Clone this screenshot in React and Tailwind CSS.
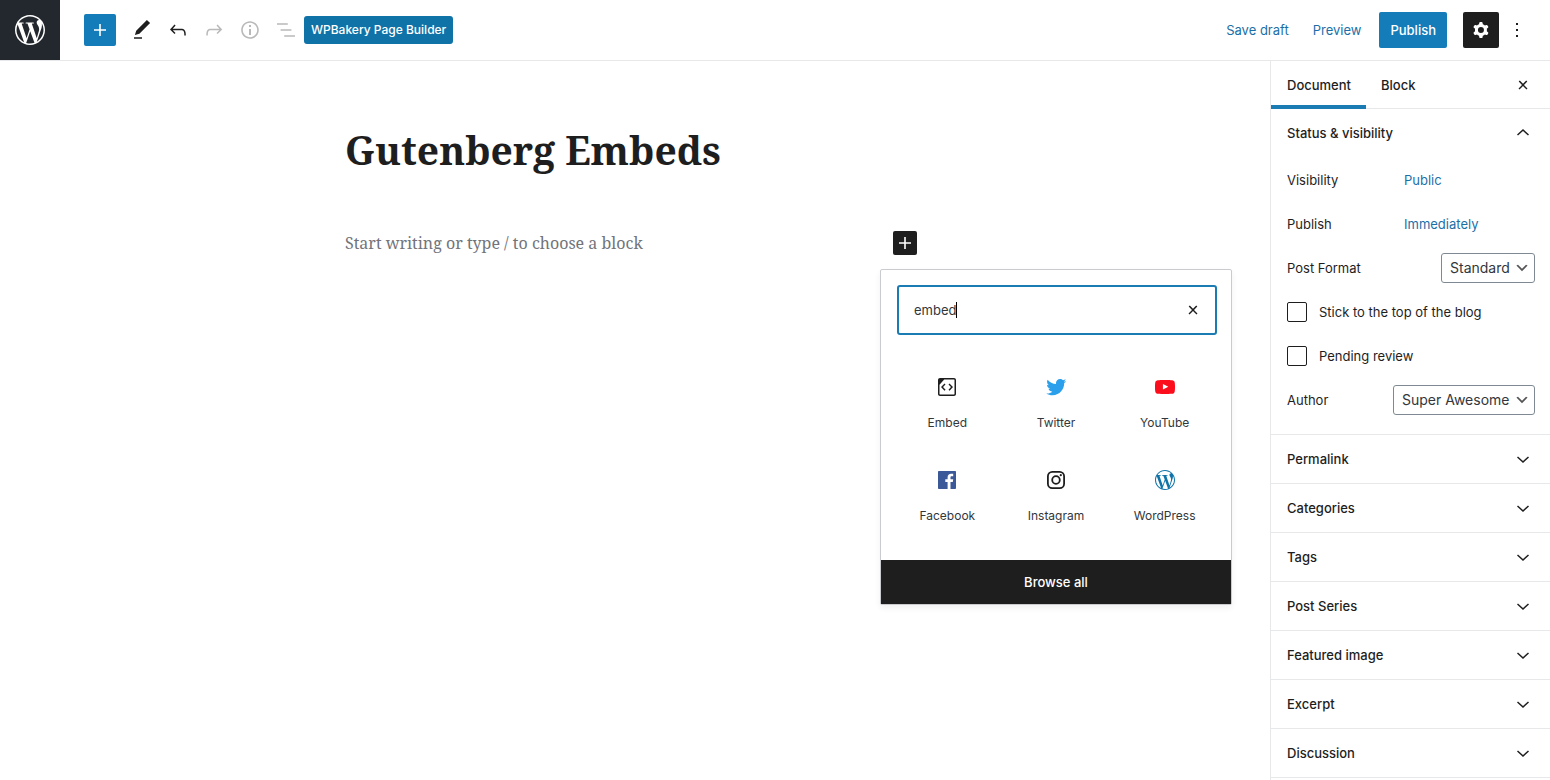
import React, { useState } from "react";
import { SiWordpress } from "react-icons/si";

const ICONS = {
  plus: "M18 11.2h-5.2V6h-1.6v5.2H6v1.6h5.2V18h1.6v-5.2H18z",
  edit: "M20.1 5.1L16.9 2 6.2 12.7l-1.3 4.4 4.5-1.3L20.1 5.1zM4 20.8h8v-1.5H4v1.5z",
  undo: "M18.3 11.7c-.6-.6-1.4-.9-2.3-.9H6.7l2.9-3.3-1.1-1-4.5 5L8.5 16l1-1-2.7-2.7H16c.5 0 .9.2 1.3.5 1 1 1 3.4 1 4.5v.3h1.5v-.2c0-1.5 0-4.3-1.5-5.7z",
  redo: "M15.6 6.5l-1.1 1 2.9 3.3H8c-.9 0-1.7.3-2.3.9-1.4 1.5-1.4 4.2-1.4 5.6v.2h1.5v-.3c0-1.1 0-3.5 1-4.5.3-.3.7-.5 1.3-.5h9.2L14.5 15l1.1 1.1 4.6-4.6-4.6-5z",
  info: "M12 3.2c-4.8 0-8.8 3.9-8.8 8.8 0 4.8 3.9 8.8 8.8 8.8 4.8 0 8.8-3.9 8.8-8.8 0-4.8-4-8.8-8.8-8.8zm0 16c-4 0-7.2-3.3-7.2-7.2C4.8 8 8 4.8 12 4.8s7.2 3.3 7.2 7.2c0 4-3.2 7.2-7.2 7.2zM11 17h2v-6h-2v6zm0-8h2V7h-2v2z",
  list: "M13.8 5.2H3v1.5h10.8V5.2zm-3.6 12v1.5H21v-1.5H10.2zm7.2-6H6.6v1.5h10.8v-1.5z",
  close:
    "M13 11.9l3.3-3.4-1.1-1-3.2 3.3-3.2-3.3-1.1 1 3.3 3.4-3.5 3.6 1 1L12 13l3.5 3.5 1-1z",
  down: "M17 9.4L12 14 7 9.4l-1 1.1 6 5.5 6-5.5z",
  up: "M17 14.6L12 10l-5 4.6-1-1.1L12 8l6 5.5z",
  more: "M13 19h-2v-2h2v2zm0-6h-2v-2h2v2zm0-6h-2V5h2v2z",
  cog: "M10.289 4.836A1 1 0 0111.275 4h1.306a1 1 0 01.987.836l.244 1.466c.787.26 1.503.679 2.108 1.218l1.393-.522a1 1 0 011.216.437l.653 1.13a1 1 0 01-.23 1.273l-1.148.944a6.025 6.025 0 010 2.435l1.149.946a1 1 0 01.23 1.272l-.653 1.13a1 1 0 01-1.216.437l-1.394-.522c-.605.54-1.32.958-2.108 1.218l-.244 1.466a1 1 0 01-.987.836h-1.306a1 1 0 01-.986-.836l-.244-1.466a5.995 5.995 0 01-2.108-1.218l-1.394.522a1 1 0 01-1.217-.436l-.653-1.131a1 1 0 01.23-1.272l1.149-.946a6.026 6.026 0 010-2.435l-1.148-.944a1 1 0 01-.23-1.272l.653-1.131a1 1 0 011.217-.437l1.393.522a5.994 5.994 0 012.108-1.218l.244-1.466zM14.929 12a3 3 0 11-6 0 3 3 0 016 0z",
  embed:
    "M19 3H5c-1.1 0-2 .9-2 2v14c0 1.1.9 2 2 2h14c1.1 0 2-.9 2-2V5c0-1.1-.9-2-2-2zm.5 16c0 .3-.2.5-.5.5H5c-.3 0-.5-.2-.5-.5V9.8l4.7-5.3H19c.3 0 .5.2.5.5v14zm-6-9.5L16 12l-2.5 2.8 1.1 1L18 12l-3.5-3.5-1 1zm-3 0l-1-1L6 12l3.5 3.8 1.1-1L8 12l2.5-2.5z",
  twitter:
    "M22.23 5.924c-.736.326-1.527.547-2.357.646.847-.508 1.498-1.312 1.804-2.27-.793.47-1.671.812-2.606.996C18.324 4.498 17.257 4 16.077 4c-2.266 0-4.103 1.837-4.103 4.103 0 .322.036.635.106.935-3.41-.17-6.433-1.804-8.457-4.287-.353.607-.556 1.312-.556 2.064 0 1.424.724 2.68 1.825 3.415-.673-.022-1.305-.207-1.86-.514v.052c0 1.988 1.415 3.647 3.293 4.023-.344.095-.707.145-1.08.145-.265 0-.522-.026-.773-.074.522 1.63 2.038 2.817 3.833 2.85-1.404 1.1-3.174 1.757-5.096 1.757-.332 0-.66-.02-.98-.057 1.816 1.164 3.973 1.843 6.29 1.843 7.547 0 11.675-6.252 11.675-11.675 0-.178-.004-.355-.012-.53.802-.578 1.497-1.3 2.047-2.124z",
  youtube:
    "M21.8 8s-.195-1.377-.795-1.984c-.76-.797-1.613-.8-2.004-.847-2.798-.203-6.996-.203-6.996-.203h-.01s-4.197 0-6.996.202c-.39.046-1.242.05-2.003.846C2.395 6.623 2.2 8 2.2 8S2 9.62 2 11.24v1.517c0 1.618.2 3.237.2 3.237s.195 1.378.795 1.985c.76.797 1.76.77 2.205.855 1.6.153 6.8.2 6.8.2s4.203-.005 7-.208c.392-.047 1.244-.05 2.005-.847.6-.607.795-1.985.795-1.985s.2-1.618.2-3.237v-1.517C22 9.62 21.8 8 21.8 8zM9.935 14.595v-5.62l5.403 2.82-5.403 2.8z",
  facebook:
    "M20 3H4c-.6 0-1 .4-1 1v16c0 .5.4 1 1 1h8.6v-7h-2.3v-2.7h2.3v-2c0-2.3 1.4-3.6 3.5-3.6 1 0 1.8.1 2.1.1v2.4h-1.4c-1.1 0-1.3.5-1.3 1.3v1.7h2.7l-.4 2.8h-2.3v7H20c.5 0 1-.4 1-1V4c0-.6-.4-1-1-1z",
};

function Icon({ name }) {
  return (
    <svg viewBox="0 0 24 24" className="size-6" fill="currentColor" aria-hidden="true">
      <path fillRule="evenodd" d={ICONS[name]} />
    </svg>
  );
}

function InstagramIcon() {
  return (
    <svg viewBox="0 0 24 24" className="size-6" fill="none" stroke="currentColor" aria-hidden="true">
      <rect x="3.9" y="3.9" width="16.2" height="16.2" rx="4.4" strokeWidth="1.8" />
      <circle cx="12" cy="12" r="3.8" strokeWidth="1.8" />
      <circle cx="16.8" cy="7.2" r="1.1" fill="currentColor" stroke="none" />
    </svg>
  );
}

const blocks = [
  { label: "Embed", icon: <Icon name="embed" /> },
  { label: "Twitter", icon: <Icon name="twitter" />, color: "text-[#2a9fec]" },
  { label: "YouTube", icon: <Icon name="youtube" />, color: "text-[#fb0d1b]" },
  { label: "Facebook", icon: <Icon name="facebook" />, color: "text-[#3b5998]" },
  { label: "Instagram", icon: <InstagramIcon /> },
  {
    label: "WordPress",
    icon: <SiWordpress className="size-5" />,
    color: "text-[#0f73a8]",
  },
];

const panels = [
  "Permalink",
  "Categories",
  "Tags",
  "Post Series",
  "Featured image",
  "Excerpt",
  "Discussion",
];

function ToolButton({ name, label, disabled }) {
  return (
    <button
      aria-label={label}
      disabled={disabled}
      className="flex size-9 items-center justify-center disabled:text-[#b9b9b9]"
    >
      <Icon name={name} />
    </button>
  );
}

function Header() {
  return (
    <header className="flex h-[61px] items-start border-b border-[#e7e8e9]">
      <a
        href="#posts"
        aria-label="View posts"
        className="flex size-[60px] items-center justify-center bg-[#23282e] text-white"
      >
        <SiWordpress className="size-[30px]" />
      </a>
      <div className="flex h-[60px] flex-1 items-center pl-6 pr-[15px]">
        <button
          aria-label="Add block"
          className="mr-2 flex size-8 items-center justify-center rounded-xs bg-[#147cb9] text-white"
        >
          <Icon name="plus" />
        </button>
        <ToolButton name="edit" label="Modes" />
        <ToolButton name="undo" label="Undo" />
        <ToolButton name="redo" label="Redo" disabled />
        <ToolButton name="info" label="Content structure" disabled />
        <ToolButton name="list" label="Block navigation" disabled />
        <button className="h-7 rounded-[3px] bg-[#0f73a8] px-[7px] text-xs font-medium text-white">
          WPBakery Page Builder
        </button>
        <div className="ml-auto flex items-center">
          <button className="mr-6 text-[#1b6fa8]">Save draft</button>
          <button className="mr-[18px] text-[#1b6fa8]">Preview</button>
          <button className="mr-4 h-9 rounded-xs bg-[#147cb9] px-[11px] font-medium text-white">
            Publish
          </button>
          <button
            aria-label="Settings"
            className="flex size-9 items-center justify-center rounded-xs bg-[#1e1e1e] text-white"
          >
            <Icon name="cog" />
          </button>
          <ToolButton name="more" label="More tools" />
        </div>
      </div>
    </header>
  );
}

function Inserter() {
  const [search, setSearch] = useState("embed");

  return (
    <div className="absolute -left-[13px] top-[38px] z-10 w-[352px] rounded-xs border border-[#c9cbce] bg-white shadow-[0_3px_6px_rgba(0,0,0,0.06)]">
      <div className="relative pl-4 pr-[14px] pt-[15px]">
        <input
          aria-label="Search for a block"
          value={search}
          onChange={(e) => setSearch(e.target.value)}
          className="h-[50px] w-full rounded-[3px] border-2 border-[#1b7bb3] pl-[15px] pr-12 text-[#32373c] outline-none"
        />
        {search === "embed" && (
          <span className="absolute left-[75px] top-8 h-4 w-px bg-black" />
        )}
        <button
          aria-label="Reset search"
          onClick={() => setSearch("")}
          className="absolute right-[26px] top-7"
        >
          <Icon name="close" />
        </button>
      </div>
      <div className="mb-[18px] mt-[21px] grid grid-cols-3 px-3">
        {blocks.map((block) => (
          <button
            key={block.label}
            className="flex h-[93px] flex-col items-center justify-center gap-4"
          >
            <span className={clsxColor(block.color)}>{block.icon}</span>
            <span className="text-xs text-[#32373c]">{block.label}</span>
          </button>
        ))}
      </div>
      <button className="block h-11 w-full bg-[#1e1e1e] font-medium text-white">
        Browse all
      </button>
    </div>
  );
}

function clsxColor(color = "text-[#1e1e1e]") {
  return `flex size-6 items-center justify-center ${color}`;
}

function Editor() {
  return (
    <main className="min-w-0 flex-1">
      <div className="mx-auto w-full max-w-[580px] font-['Noto_Serif','DejaVu_Serif',serif]">
        <input
          aria-label="Title"
          defaultValue="Gutenberg Embeds"
          className="mt-[58px] block h-[60px] w-full text-[39px] font-bold text-[#1e1e1e] outline-none"
        />
        <div className="mt-[50px] flex h-7 items-center">
          <input
            aria-label="Block text"
            placeholder="Start writing or type / to choose a block"
            className="min-w-0 flex-1 text-base outline-none placeholder:text-[#72747a]"
          />
          <div className="relative mr-2 font-['Inter',sans-serif]">
            <button
              aria-label="Add block"
              className="flex size-6 items-center justify-center rounded-xs bg-[#1e1e1e] text-white"
            >
              <Icon name="plus" />
            </button>
            <Inserter />
          </div>
        </div>
      </div>
    </main>
  );
}

function SelectRow({ id, label, value }) {
  return (
    <div className="flex h-11 items-center justify-between">
      <label htmlFor={id}>{label}</label>
      <div className="relative">
        <select
          id={id}
          className="block h-[30px] appearance-none rounded-[3px] border border-[#7e8993] bg-white pl-2 pr-6 text-sm text-[#32373c]"
        >
          <option>{value}</option>
        </select>
        <svg
          viewBox="0 0 20 20"
          className="pointer-events-none absolute right-[5px] top-[7px] size-4 text-[#555]"
          fill="currentColor"
          aria-hidden="true"
        >
          <path d="M5 6l5 5 5-5 2 1-7 7-7-7 2-1z" />
        </svg>
      </div>
    </div>
  );
}

function CheckRow({ label }) {
  return (
    <label className="flex h-11 items-center gap-3">
      <input
        type="checkbox"
        className="size-5 appearance-none rounded-xs border border-[#1e1e1e] checked:bg-[#147cb9]"
      />
      {label}
    </label>
  );
}

function Sidebar() {
  return (
    <aside className="w-[280px] shrink-0 border-l border-[#e7e8e9]">
      <div className="flex h-12 items-center border-b border-[#e7e8e9] pr-[15px]">
        <button className="h-12 border-b-4 border-[#1b7bb3] pl-4 pr-[15px] pt-1 font-medium">
          Document
        </button>
        <button className="h-12 px-[15px] font-medium">Block</button>
        <button aria-label="Close settings" className="ml-auto">
          <Icon name="close" />
        </button>
      </div>
      <section className="border-b border-[#e7e8e9] pb-3 pl-4 pr-[15px]">
        <button className="mb-px flex h-12 w-full items-center justify-between font-medium">
          Status &amp; visibility
          <Icon name="up" />
        </button>
        <div className="flex h-11 items-center">
          <span className="w-[117px]">Visibility</span>
          <button className="text-[#1b6fa8]">Public</button>
        </div>
        <div className="flex h-11 items-center">
          <span className="w-[117px]">Publish</span>
          <button className="text-[#1b6fa8]">Immediately</button>
        </div>
        <SelectRow id="post-format" label="Post Format" value="Standard" />
        <CheckRow label="Stick to the top of the blog" />
        <CheckRow label="Pending review" />
        <SelectRow id="author" label="Author" value="Super Awesome" />
      </section>
      {panels.map((panel) => (
        <button
          key={panel}
          className="flex h-[49px] w-full items-center justify-between border-b border-[#e7e8e9] pl-4 pr-[15px] font-medium"
        >
          {panel}
          <Icon name="down" />
        </button>
      ))}
    </aside>
  );
}

export default function App() {
  return (
    <div className="flex min-h-screen flex-col bg-white font-['Inter',sans-serif] text-[13px] leading-4 text-[#1e1e1e]">
      <Header />
      <div className="flex flex-1">
        <Editor />
        <Sidebar />
      </div>
    </div>
  );
}
